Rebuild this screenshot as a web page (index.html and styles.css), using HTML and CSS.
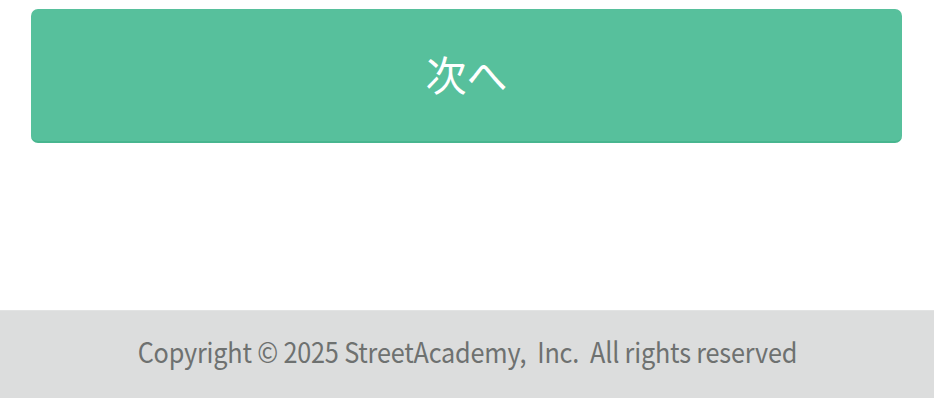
FILE: index.html
```html
<!DOCTYPE html>
<html lang="ja">
<head>
<meta charset="utf-8">
<title>次へ</title>
<link rel="stylesheet" href="styles.css">
</head>
<body>
<main class="content">
  <button class="next-btn" type="button">次へ</button>
</main>
<footer class="footer">
  <p class="copyright">Copyright © 2025 StreetAcademy,&nbsp; Inc.&nbsp; All rights reserved</p>
</footer>
</body>
</html>
```
FILE: styles.css
```css
* { box-sizing: border-box; }
html, body { margin: 0; padding: 0; background: #ffffff; }
body {
  font-family: "Noto Sans CJK JP", "Noto Sans", sans-serif;
  width: 934px;
  height: 398px;
  display: flex;
  flex-direction: column;
}
.content {
  padding: 9px 32px 0 31px;
  height: 310px;
}
.next-btn {
  display: flex;
  align-items: center;
  justify-content: center;
  width: 100%;
  height: 134px;
  background: #57c09c;
  border: none;
  border-bottom: 2px solid #48b68f;
  border-radius: 7px;
  color: #ffffff;
  font-family: "Noto Sans CJK JP", sans-serif;
  font-size: 41px;
  font-weight: 400;
  padding: 0 0 5px 0;
  margin: 0;
}
.footer {
  height: 88px;
  background: #dcdddd;
  border-top: 1px solid #e2e3e3;
  display: flex;
  align-items: center;
  justify-content: center;
}
.copyright {
  margin: 0;
  color: #6e7170;
  font-size: 28px;
  letter-spacing: -0.2px;
  line-height: 1;
  padding-bottom: 8px;
  white-space: nowrap;
  transform: scaleX(0.9);
}
```
